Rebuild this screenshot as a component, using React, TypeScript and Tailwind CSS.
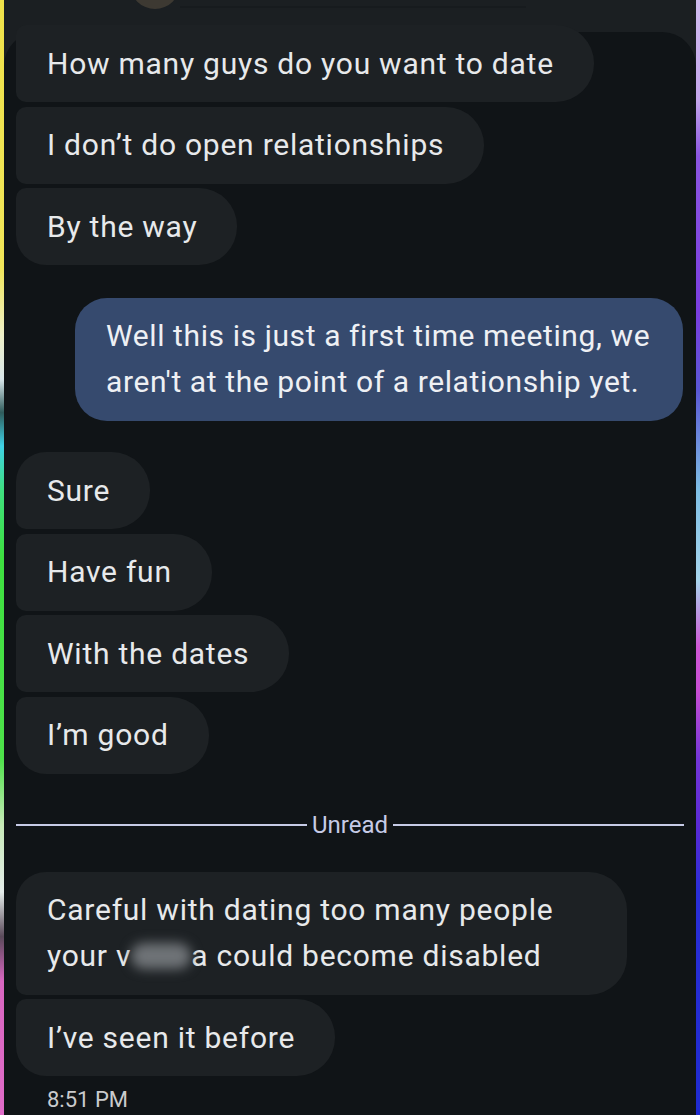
const incomingTop = [
  "How many guys do you want to date",
  "I don\u2019t do open relationships",
  "By the way",
];

const incomingMid = ["Sure", "Have fun", "With the dates", "I\u2019m good"];

function Bubble({
  children,
  className = "pr-[40px]",
}: {
  children: React.ReactNode;
  className?: string;
}) {
  return (
    <div
      className={`self-start bg-[#1d2124] text-[#e7e9eb] text-[30px] tracking-[0.75px] leading-[46px] py-[15.5px] pl-[31px] rounded-r-[38px] rounded-l-[10px] ${className}`}
    >
      {children}
    </div>
  );
}

export default function App() {
  return (
    <div
      className="w-[700px] h-[1115px] flex overflow-hidden bg-[#101417]"
      style={{ fontFamily: "Roboto, 'Noto Sans', sans-serif" }}
    >
      {/* left glow strip */}
      <div className="w-[4px] shrink-0 bg-[linear-gradient(to_bottom,#efe24a_0%,#f1e65a_24%,#eef0c8_30%,#d8e6ea_34%,#2f5c5c_37%,#3fd2e6_40%,#3fe080_44%,#3ee040_50%,#4ee24a_68%,#c8eab8_74%,#e4ecea_80%,#5a4a5a_84%,#d866c0_88%,#e06cc8_100%)]" />

      <div className="flex-1 flex flex-col bg-[#1b1f22]">
        {/* bottom of previous card */}
        <div className="h-[32px] shrink-0 flex items-start pl-[126px] overflow-hidden">
          <div className="w-[50px] h-[50px] rounded-full bg-[#3d3932] -mt-[41px] shrink-0" />
          <div className="w-[346px] h-[2px] mt-[6px] bg-[#171b1e]" />
        </div>

        <div className="flex-1 flex flex-col bg-[#101417] rounded-t-[34px] px-[12px]">
          <div className="flex flex-col gap-[4.5px] -mt-[7px]">
            {incomingTop.map((t, i) => (
              <Bubble
                key={t}
                className={
                  i === incomingTop.length - 1
                    ? "pr-[40px] rounded-bl-[30px]"
                    : "pr-[40px]"
                }
              >
                {t}
              </Bubble>
            ))}
          </div>

          {/* sent */}
          <div className="self-end mt-[32.5px] mr-[1px] w-[608px] bg-[#364a6e] text-[#eef0f4] text-[30px] tracking-[0.6px] leading-[46px] py-[15.5px] pl-[31px] pr-[12px] rounded-[32px]">
            Well this is just a first time meeting, we aren't at the point of a
            relationship yet.
          </div>

          <div className="flex flex-col gap-[4.5px] mt-[31.5px]">
            {incomingMid.map((t, i) => (
              <Bubble
                key={t}
                className={
                  i === 0
                    ? "pr-[40px] rounded-tl-[30px]"
                    : i === incomingMid.length - 1
                      ? "pr-[40px] rounded-bl-[30px]"
                      : "pr-[40px]"
                }
              >
                {t}
              </Bubble>
            ))}
          </div>

          {/* unread divider */}
          <div className="h-[98px] pt-[5px] flex items-center gap-[5px] shrink-0">
            <div className="flex-1 h-[1.5px] bg-[#c6cbe6]" />
            <span className="text-[24px] leading-none text-[#c6cbe6]">Unread</span>
            <div className="flex-1 h-[1.5px] bg-[#c6cbe6]" />
          </div>

          <div className="flex flex-col gap-[4.5px]">
            <Bubble className="pr-[74px] rounded-tl-[30px]">
              Careful with dating too many people
              <br />
              your v
              <span className="inline-block align-middle w-[60px] h-[26px] -mt-[4px] bg-[#6f7377] blur-[6px] rounded-full" />
              a could become disabled
            </Bubble>
            <Bubble className="pr-[40px] rounded-bl-[30px]">I&rsquo;ve seen it before</Bubble>
          </div>

          <div className="pl-[31px] mt-[11px] text-[22px] leading-[26px] text-[#c9cbcd]">
            8:51 PM
          </div>
        </div>
      </div>

      {/* right glow strip */}
      <div className="w-[4px] shrink-0 bg-[linear-gradient(to_bottom,#d2bdf0_0%,#c4a6ec_9%,#8c56e2_14%,#7a3ee0_28%,#5a58d6_35%,#7fc0e6_44%,#a8d6ee_52%,#d058d6_58%,#c84ed4_62%,#7436d8_68%,#5a2ad6_74%,#2a2ed8_80%,#1f2bd0_100%)]" />
    </div>
  );
}
